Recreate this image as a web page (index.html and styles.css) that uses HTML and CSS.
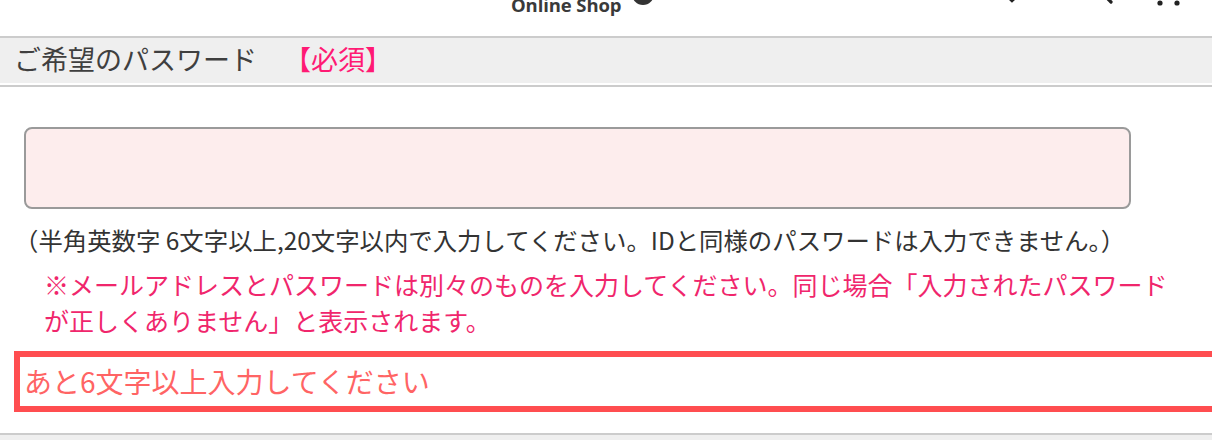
FILE: index.html
```html
<!DOCTYPE html>
<html lang="ja">
<head>
<meta charset="utf-8">
<title>パスワード</title>
<link rel="stylesheet" href="styles.css">
</head>
<body>
<header class="topbar">
  <span class="logo">Online Shop</span>
  <span class="logo-dot"></span>
  <svg class="icon icon-heart" width="28" height="24" viewBox="0 0 28 24"><path d="M14 22 L4 12.5 A6 6 0 0 1 14 5 A6 6 0 0 1 24 12.5 Z" fill="none" stroke="#222" stroke-width="2.6" stroke-linejoin="miter"/></svg>
  <svg class="icon icon-search" width="28" height="28" viewBox="0 0 28 28"><circle cx="12" cy="12" r="8" fill="none" stroke="#222" stroke-width="2.6"/><path d="M18 18 L25 25" stroke="#222" stroke-width="3.2" stroke-linecap="round"/></svg>
  <svg class="icon icon-cart" width="32" height="28" viewBox="0 0 32 28"><path d="M2 4 H7 L10 19 H28 L30 8 H8" fill="none" stroke="#222" stroke-width="2.4"/><circle cx="10" cy="25" r="2.6" fill="#222"/><circle cx="27" cy="25" r="2.6" fill="#222"/></svg>
</header>

<section class="field">
  <h2 class="field-head">ご希望のパスワード　<span class="required">【必須】</span></h2>
  <div class="field-body">
    <input class="pw-input" type="password" aria-label="パスワード">
    <p class="hint">（半角英数字 6文字以上,20文字以内で入力してください。IDと同様のパスワードは入力できません。）</p>
    <p class="note">※メールアドレスとパスワードは別々のものを入力してください。同じ場合「入力されたパスワード<br>が正しくありません」と表示されます。</p>
    <div class="error">あと6文字以上入力してください</div>
  </div>
</section>
<div class="next-section"></div>
</body>
</html>
```

FILE: styles.css
```css
html, body {
  margin: 0;
  padding: 0;
  overflow: hidden;
  background: #fff;
}
body {
  font-family: "Noto Sans CJK JP", "Noto Sans", sans-serif;
  color: #333;
}

.topbar {
  display: flex;
  align-items: flex-end;
  height: 36px;
  overflow: hidden;
}
.logo {
  margin-left: 511px;
  margin-bottom: 22px;
  font-family: "Open Sans", "Noto Sans", sans-serif;
  font-weight: 700;
  font-size: 18.5px;
  line-height: 18px;
  color: #3a3a3a;
  letter-spacing: -0.1px;
  white-space: nowrap;
}
.logo-dot {
  width: 22px;
  height: 22px;
  border-radius: 50%;
  background: #333;
  margin-left: 11px;
  margin-bottom: 31px;
  flex: none;
}
.icon { flex: none; display: block; }
.icon-heart { margin-left: auto; margin-bottom: 33px; }
.icon-search { margin-left: 60px; margin-bottom: 31px; }
.icon-cart { margin-left: 36px; margin-right: 30px; margin-bottom: 30px; }

.field-head {
  margin: 0;
  border-top: 2px solid #ccc;
  border-bottom: 2px solid #fff;
  background: #efefef;
  display: flex;
  align-items: center;
  padding-left: 14px;
  font-weight: 400;
  font-size: 27px;
  color: #3f3f3f;
  line-height: 1;
  padding-bottom: 5px;
  box-sizing: content-box;
  height: 40px;
}
.required {
  color: #ff1a74;
}

.field-body {
  border-top: 2px solid #ccc;
  padding: 40px 0 21px 14px;
}
.pw-input {
  display: block;
  box-sizing: border-box;
  margin: 0 0 0 10px;
  width: 1107px;
  height: 82px;
  border: 2px solid #9a9a9a;
  border-radius: 8px;
  background: #fdeded;
  padding: 0 12px;
  font-size: 24px;
  outline: none;
}
.hint {
  margin: 14px 0 0;
  font-size: 24.4px;
  line-height: 34px;
  color: #333;
  white-space: nowrap;
}
.note {
  margin: 9px 0 0 30px;
  font-size: 25px;
  line-height: 36px;
  color: #f0266c;
  white-space: nowrap;
}
.error {
  margin: 13px -30px 0 0;
  border: 6px solid #ff4d50;
  height: 49px;
  line-height: 49px;
  padding-left: 4px;
  font-size: 28px;
  color: #ff6464;
  white-space: nowrap;
}

.next-section {
  border-top: 2px solid #ccc;
  background: #efefef;
  height: 40px;
}
```
